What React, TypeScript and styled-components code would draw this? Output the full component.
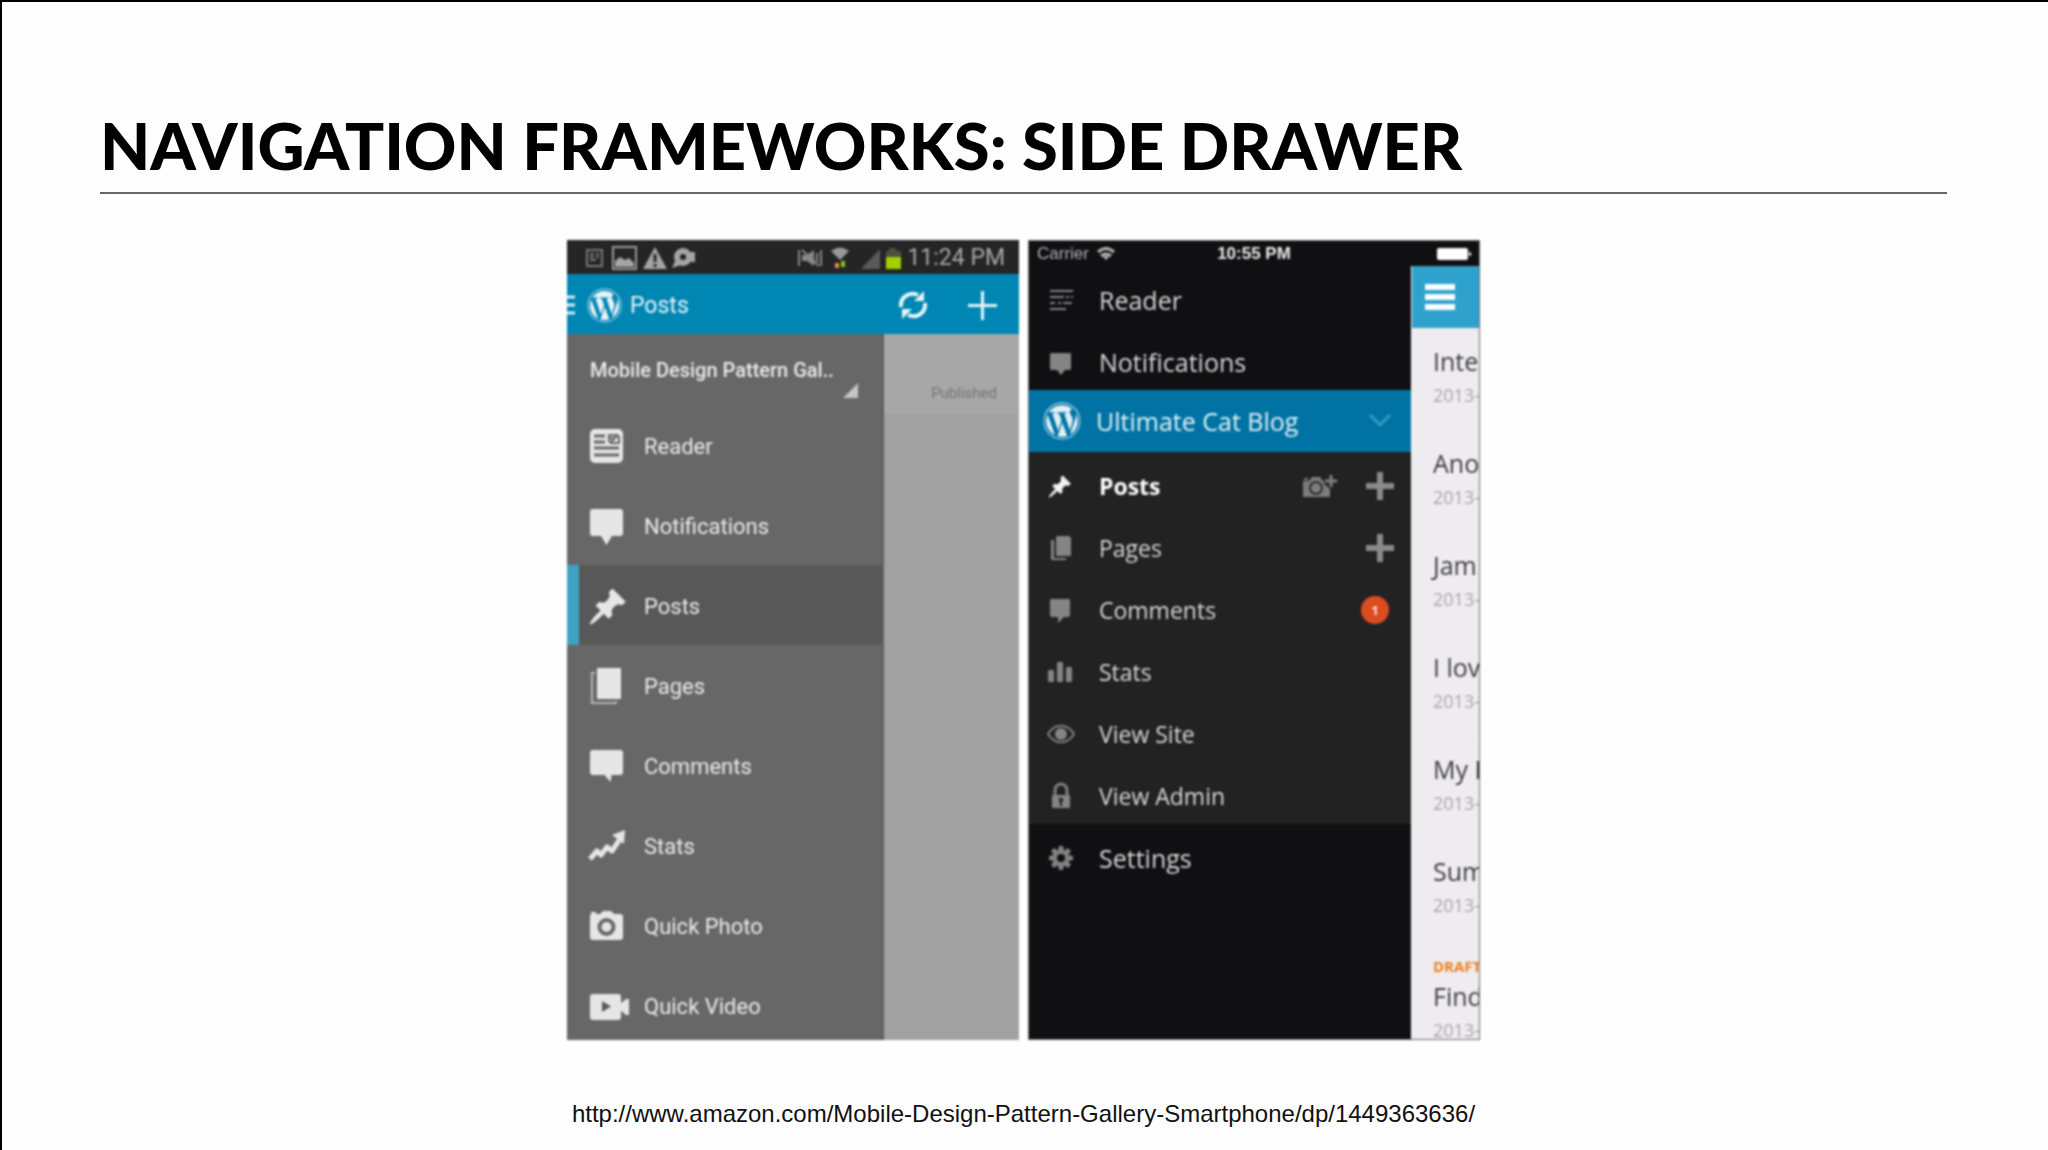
import React from 'react';
import styled, { createGlobalStyle } from 'styled-components';
import { FaWordpress } from 'react-icons/fa';

const GlobalStyle = createGlobalStyle`
  *, *::before, *::after { box-sizing: border-box; }
  body { margin: 0; background: #fefefe; }
  button, select { border: 0; padding: 0; background: none; font: inherit; color: inherit; cursor: pointer; }
  ul { list-style: none; margin: 0; padding: 0; }
`;

const Slide = styled.main`
  min-height: 100vh;
  display: flex;
  flex-direction: column;
  padding: 108px 101px 0 98px;
  border-top: 2px solid #000;
  border-left: 2px solid #000;
  background: #fefefe;
`;

const Title = styled.h1`
  margin: 0;
  padding-bottom: 12px;
  border-bottom: 2px solid #666;
  font: 900 65px/70px Lato, 'Open Sans', sans-serif;
  color: #000;
`;

const Gallery = styled.div`
  display: flex;
  justify-content: center;
  gap: 9px;
  margin-top: 46px;
`;

const Phone = styled.section<{ $font: string }>`
  display: flex;
  flex-direction: column;
  width: 452px;
  height: 800px;
  overflow: hidden;
  font-family: ${(p) => p.$font};
  filter: blur(1px);
`;

const Source = styled.a`
  align-self: center;
  margin-top: 58px;
  font: 24px/32px 'Liberation Sans', Arial, sans-serif;
  color: #111;
  text-decoration: none;
`;

/* Android phone */

const AndroidPhone = styled(Phone)`
  background: #a1a1a1;
`;

const AndroidStatus = styled.div`
  display: flex;
  align-items: center;
  gap: 5px;
  flex: none;
  height: 34px;
  padding: 2px 14px 0 17px;
  background: #252525;
  color: #a8a8a8;
`;

const AndroidClock = styled.time`
  font-size: 23px;
  line-height: 32px;
`;

const Spacer = styled.span`
  flex: 1;
`;

const ActionBar = styled.header`
  display: flex;
  align-items: center;
  flex: none;
  height: 60px;
  padding: 2px 22px 0 0;
  background: #0086b3;
  color: #e8f4f9;
`;

const ActionTitle = styled.h2`
  flex: 1;
  margin: 0 0 0 8px;
  font-size: 23px;
  font-weight: 400;
`;

const IconButton = styled.button<{ $left?: number }>`
  display: flex;
  margin-left: ${(p) => p.$left ?? 0}px;
`;

const AndroidBody = styled.div`
  display: flex;
  flex: 1;
  min-height: 0;
`;

const AndroidDrawer = styled.nav`
  flex: none;
  width: 317px;
  border-right: 2px solid #5f5f5f;
  background: #676767;
  color: #ebebeb;
`;

const Account = styled.label`
  position: relative;
  display: block;
  height: 71px;
  padding: 24px 24px 0 23px;
`;

const AccountSelect = styled.select`
  appearance: none;
  display: block;
  width: 100%;
  height: 24px;
  font-size: 20px;
  font-weight: 500;
  line-height: 24px;
`;

const Corner = styled.svg`
  position: absolute;
  right: 24px;
  bottom: 7px;
  pointer-events: none;
`;

const AndroidItem = styled.button<{ $active?: boolean }>`
  display: flex;
  align-items: center;
  gap: 20px;
  width: 100%;
  height: 80px;
  padding: 2px 0 0 9px;
  border-left: 12px solid ${(p) => (p.$active ? '#3fa2c4' : 'transparent')};
  background: ${(p) => (p.$active ? '#585858' : 'none')};
  font-size: 22px;
  text-align: left;
`;

const AndroidContent = styled.div`
  flex: 1;
`;

const Published = styled.div`
  padding: 49px 22px 11px 0;
  background: #a7a7a7;
  color: #757575;
  font-size: 15px;
  line-height: 20px;
  text-align: right;
`;

/* iPhone */

const ApplePhone = styled(Phone)`
  border: 1px solid #6c6c6e;
  background: #100f11;
`;

const AppleStatus = styled.div`
  display: grid;
  grid-template-columns: 1fr auto 1fr;
  align-items: center;
  flex: none;
  height: 25px;
  padding: 0 8px;
  color: #b4b4b4;
  font: 17px/25px 'Liberation Sans', Arial, sans-serif;
`;

const Carrier = styled.span`
  display: flex;
  align-items: center;
  gap: 8px;
`;

const AppleClock = styled.time`
  color: #eee;
  font-weight: 700;
`;

const Battery = styled.svg`
  justify-self: end;
`;

const AppleBody = styled.div`
  display: flex;
  flex: 1;
  min-height: 0;
`;

const AppleDrawer = styled.nav`
  flex: none;
  width: 382px;
  color: #d8d8d8;
`;

const Group = styled.ul<{ $sub?: boolean }>`
  display: flex;
  flex-direction: column;
  gap: 6px;
  padding-top: 6px;
  background: ${(p) => (p.$sub ? '#222222' : 'none')};
  font-size: ${(p) => (p.$sub ? 23 : 25)}px;
`;

const AppleRow = styled.li`
  display: flex;
  align-items: center;
  height: 56px;
  padding-right: 17px;
`;

const AppleItem = styled.button<{ $bold?: boolean }>`
  display: flex;
  align-items: center;
  gap: 24px;
  flex: 1;
  height: 56px;
  padding-left: 18px;
  color: ${(p) => (p.$bold ? '#fff' : 'inherit')};
  font-weight: ${(p) => (p.$bold ? 700 : 400)};
  text-align: left;
`;

const Blog = styled.button`
  display: flex;
  align-items: center;
  gap: 15px;
  width: 100%;
  height: 62px;
  padding: 0 20px 0 14px;
  background: #0073a4;
  color: #e2f1f7;
  font-size: 25px;
`;

const Badge = styled.span`
  display: flex;
  align-items: center;
  justify-content: center;
  width: 28px;
  height: 28px;
  margin-right: 5px;
  border-radius: 50%;
  background: #dc4c20;
  color: #fbe0d6;
  font-size: 13px;
  font-weight: 700;
`;

const AppleContent = styled.div`
  flex: 1;
  min-width: 0;
  overflow: hidden;
  border-left: 1px solid #fafafa;
  background: #eeecef;
`;

const MenuBar = styled.header`
  display: flex;
  align-items: center;
  height: 62px;
  padding-left: 13px;
  background: #2ea2cc;
`;

const Entry = styled.article`
  height: 102px;
  margin-left: 21px;
  padding-top: 17px;
  border-bottom: 1px solid #e9e7ea;
  white-space: nowrap;
`;

const Draft = styled.p`
  margin: 0 0 5px;
  color: #f07f20;
  font-size: 15px;
  font-weight: 700;
  line-height: 18px;
`;

const EntryTitle = styled.h3`
  margin: 0;
  color: #3c3c3e;
  font-size: 25px;
  font-weight: 400;
  line-height: 32px;
`;

const EntryDate = styled.time`
  display: block;
  margin-top: 7px;
  color: #a6a6a8;
  font-size: 18px;
  line-height: 22px;
`;

/* Drawings */

const PIN =
  'M10.44 3.02l1.82-1.82 6.36 6.35-1.83 1.82c-1.05-.68-2.48-.57-3.41.36l-.75.75c-.92.93-1.04 2.35-.35 3.41l-1.83 1.82-2.41-2.41-2.8 2.79c-.42.42-3.38 2.71-3.8 2.29s1.86-3.39 2.28-3.81l2.79-2.79L4.1 9.36l1.83-1.82c1.05.69 2.48.57 3.4-.36l.75-.75c.93-.92 1.05-2.35.36-3.41z';

const androidIcons: Record<string, React.ReactNode> = {
  reader: (
    <>
      <rect x="2" y="1" width="33" height="34" rx="5" />
      <path d="M6 8h11M6 14h11M6 20h25M6 27h25" stroke="#676767" strokeWidth="3" />
      <path d="M21 7h8l2 2v6h-8l-2-2zM23 14l6-6M22 10h5" fill="none" stroke="#676767" strokeWidth="2" />
    </>
  ),
  notifications: <path d="M5 1h27a3 3 0 0 1 3 3v21a3 3 0 0 1-3 3h-8l-5.500 9-5.500-9H5a3 3 0 0 1-3-3V4a3 3 0 0 1 3-3z" />,
  posts: <path transform="translate(-1 -2) scale(2.080)" d={PIN} />,
  pages: (
    <>
      <rect x="9" y="0" width="24" height="31" rx="1" />
      <path d="M7 5H4v30h24v-2" fill="none" stroke="#b4b4b4" strokeWidth="2" />
    </>
  ),
  comments: <path d="M5 2h27a3 3 0 0 1 3 3v19a3 3 0 0 1-3 3h-8.500l-1 7-6-7H5a3 3 0 0 1-3-3V5a3 3 0 0 1 3-3z" />,
  stats: (
    <>
      <path d="M2 31l7-8 4 4 6-8 5 4 8-12" fill="none" stroke="#e6e6e6" strokeWidth="5" strokeLinejoin="round" />
      <path d="M24 7l13-5-1 14z" />
    </>
  ),
  photo: (
    <>
      <path d="M3 4h5v2h4l3-3h8l3 3h6a3 3 0 0 1 3 3v20a3 3 0 0 1-3 3H5a3 3 0 0 1-3-3V7h1z" />
      <circle cx="18.500" cy="19" r="7" fill="#e6e6e6" stroke="#676767" strokeWidth="4" />
    </>
  ),
  video: (
    <>
      <rect x="2" y="6" width="31" height="26" rx="3" />
      <path d="M31 17l7-6h3v16h-3l-7-6z" />
      <path d="M14 13v11l9-5.500z" fill="#5a5a5a" />
    </>
  ),
};

const AndroidIcon = ({ name }: { name: string }) => (
  <svg width="36" height="36" viewBox="0 0 36 36" fill="#e6e6e6" overflow="visible" aria-hidden="true">
    {androidIcons[name]}
  </svg>
);

const appleIcons: Record<string, React.ReactNode> = {
  reader: (
    <path
      d="M3 5h23M3 11h14M19 11h3M24 11h2M3 17h5M11 17h3M16 17h9M3 23h16"
      fill="none"
      stroke="#848484"
      strokeWidth="2"
    />
  ),
  notifications: <path d="M4 5h19l1 1v15l-1 1h-5l-4 5-4-5H4l-1-1V6z" />,
  posts: <path fill="#f4f4f4" transform="translate(0 2) scale(1.280)" d={PIN} />,
  pages: (
    <>
      <path d="M10 2h12l2 2v18H9V3z" />
      <path d="M4 6h3v18h12v2H4z" />
    </>
  ),
  comments: <path d="M4 3h18l1 1v15l-1 2h-5l-6 6v-6H4l-1-2V4z" />,
  stats: (
    <>
      <rect x="1" y="12" width="6" height="12" rx="1" />
      <rect x="10" y="4" width="6" height="20" rx="1" />
      <rect x="19" y="9" width="6" height="15" rx="1" />
    </>
  ),
  site: (
    <>
      <path d="M1 14c7-11 19-11 26 0-7 11-19 11-26 0z" fill="none" stroke="#808080" strokeWidth="2" />
      <circle cx="14" cy="14" r="6" />
    </>
  ),
  admin: (
    <>
      <path d="M8 14V8a6 6 0 0 1 12 0v6" fill="none" stroke="#808080" strokeWidth="3" />
      <rect x="5" y="13" width="18" height="13" rx="1" />
      <path d="M12 16h4v3l-1 1v4h-2v-4l-1-1z" fill="#222" />
    </>
  ),
  settings: (
    <>
      <circle cx="14" cy="14" r="6" fill="none" stroke="#808080" strokeWidth="4" />
      {[0, 45, 90, 135, 180, 225, 270, 315].map((a) => (
        <path key={a} d="M12 2h4l1 5h-6z" transform={`rotate(${a} 14 14)`} />
      ))}
    </>
  ),
};

const AppleIcon = ({ name }: { name: string }) => (
  <svg width="28" height="28" viewBox="0 0 28 28" fill="#848484" aria-hidden="true">
    {appleIcons[name]}
  </svg>
);

const Plus = ({ size, weight, color }: { size: number; weight: number; color: string }) => (
  <svg width={size} height={size} viewBox="0 0 28 28" aria-hidden="true">
    <path d="M14 0v28M0 14h28" stroke={color} strokeWidth={weight} />
  </svg>
);

const NoticeIcons = () => (
  <svg width="114" height="26" viewBox="0 0 114 26" fill="#a4a4a4" aria-hidden="true">
    <path d="M3 5h15v16H3z" fill="none" stroke="#777" strokeWidth="2" />
    <path d="M6 9h4M12 9h3M6 12h4M12 12h3M6 15h6" stroke="#777" strokeWidth="2" />
    <path d="M29 2h23v22H29z" fill="none" stroke="#999" strokeWidth="2" />
    <path d="M31 22v-6l5-4 5 3 4-2 5 5v4z" />
    <path d="M71 2l12 22H59z" />
    <path d="M71 9v8M71 19v3" stroke="#252525" strokeWidth="3" />
    <circle cx="99" cy="12" r="9" />
    <path d="M91 16l-3 7 9-3zM105 7h6v10h-6z" />
    <circle cx="99" cy="12" r="3" fill="#222" />
  </svg>
);

const SignalIcons = () => (
  <svg width="104" height="26" viewBox="0 0 104 26" aria-hidden="true">
    <path d="M1 5v16M23 5v16" stroke="#888" strokeWidth="2" />
    <path d="M4 10h5l7-5v16l-7-5H4z" fill="#888" />
    <path d="M4 5l17 16M19 8v9" stroke="#888" strokeWidth="2" />
    <path d="M33 6q9-7 18 0l-9 9z" fill="#999" />
    <path d="M37 18h4v5h-4z" fill="#e89042" />
    <path d="M43 16h4v6h-4z" fill="#8dbd21" />
    <path d="M63 24L82 4v20z" fill="#595959" />
    <path d="M91 3h7v3h5v8H88V6h3z" fill="#4b5140" />
    <path d="M88 12h15v12H88z" fill="#a4d000" />
  </svg>
);

const androidNav = [
  ['reader', 'Reader'],
  ['notifications', 'Notifications'],
  ['posts', 'Posts'],
  ['pages', 'Pages'],
  ['comments', 'Comments'],
  ['stats', 'Stats'],
  ['photo', 'Quick Photo'],
  ['video', 'Quick Video'],
];

const entries = ['Inte', 'Ano', 'Jam', 'I lov', 'My F', 'Sum', 'Find'];

const AppleNavRow = ({ icon, label, bold, children }: {
  icon: string;
  label: string;
  bold?: boolean;
  children?: React.ReactNode;
}) => (
  <AppleRow>
    <AppleItem $bold={bold}>
      <AppleIcon name={icon} />
      {label}
    </AppleItem>
    {children}
  </AppleRow>
);

const Android = () => (
  <AndroidPhone $font="Roboto, sans-serif">
    <AndroidStatus>
      <NoticeIcons />
      <Spacer />
      <SignalIcons />
      <AndroidClock>11:24 PM</AndroidClock>
    </AndroidStatus>
    <ActionBar>
      <IconButton aria-label="Close drawer">
        <svg width="20" height="24" viewBox="0 0 20 24" aria-hidden="true">
          <path d="M0 4h8M0 12h8M0 20h8" stroke="#d9edf5" strokeWidth="3" />
        </svg>
      </IconButton>
      <FaWordpress size={35} />
      <ActionTitle>Posts</ActionTitle>
      <IconButton aria-label="Refresh">
        <svg width="30" height="30" viewBox="0 0 30 30" fill="none" stroke="#e8f4f9" strokeWidth="4" aria-hidden="true">
          <path d="M3 17C2 8 10 1 20 5M27 13c1 9-7 16-17 12" />
          <path d="M26 1v10H16zM4 29V19h10z" fill="#e8f4f9" stroke="none" />
        </svg>
      </IconButton>
      <IconButton aria-label="New post" $left={40}>
        <Plus size={29} weight={3} color="#e8f4f9" />
      </IconButton>
    </ActionBar>
    <AndroidBody>
      <AndroidDrawer aria-label="Android drawer">
        <Account>
          <AccountSelect aria-label="Blog">
            <option>Mobile Design Pattern Gal..</option>
          </AccountSelect>
          <Corner width="15" height="15" viewBox="0 0 15 15" aria-hidden="true">
            <path d="M15 0v15H0z" fill="#c4c4c4" />
          </Corner>
        </Account>
        <ul>
          {androidNav.map(([icon, label]) => (
            <li key={icon}>
              <AndroidItem $active={icon === 'posts'}>
                <AndroidIcon name={icon} />
                {label}
              </AndroidItem>
            </li>
          ))}
        </ul>
      </AndroidDrawer>
      <AndroidContent>
        <Published>Published</Published>
      </AndroidContent>
    </AndroidBody>
  </AndroidPhone>
);

const Apple = () => (
  <ApplePhone $font="'Open Sans', sans-serif">
    <AppleStatus>
      <Carrier>
        Carrier
        <svg width="18" height="14" viewBox="0 0 18 14" fill="none" stroke="#b4b4b4" strokeWidth="3" aria-hidden="true">
          <path d="M1 5q8-7 16 0M4 9q5-4 10 0" />
          <path d="M6 10q3-2 6 0l-3 3z" fill="#b4b4b4" stroke="none" />
        </svg>
      </Carrier>
      <AppleClock>10:55 PM</AppleClock>
      <Battery width="34" height="12" viewBox="0 0 34 12" fill="#fff" aria-hidden="true">
        <rect width="31" height="12" rx="2" />
        <rect x="32" y="4" width="2" height="4" rx="1" />
      </Battery>
    </AppleStatus>
    <AppleBody>
      <AppleDrawer aria-label="iPhone drawer">
        <Group>
          <AppleNavRow icon="reader" label="Reader" />
          <AppleNavRow icon="notifications" label="Notifications" />
        </Group>
        <Blog aria-expanded="true">
          <FaWordpress size={38} />
          Ultimate Cat Blog
          <Spacer />
          <svg width="22" height="14" viewBox="0 0 22 14" aria-hidden="true">
            <path d="M1 1l10 10L21 1" fill="none" stroke="#3499c2" strokeWidth="3" />
          </svg>
        </Blog>
        <Group $sub>
          <AppleNavRow icon="posts" label="Posts" bold>
            <IconButton aria-label="Quick photo post">
              <svg width="34" height="22" viewBox="0 0 34 22" fill="#7c7c7c" aria-hidden="true">
                <path d="M0 6h6l3-4h8l3 4h3v5h4v11H0zM1 3h4v2H1z" />
                <circle cx="13" cy="13" r="6" fill="#7c7c7c" stroke="#2a2a2a" strokeWidth="2" />
                <path d="M27 1v12M21 7h12" stroke="#222" strokeWidth="5" />
                <path d="M28 0v12M22 6h12" stroke="#808080" strokeWidth="3" />
              </svg>
            </IconButton>
            <IconButton aria-label="New post" $left={29}>
              <Plus size={28} weight={6} color="#8a8a8a" />
            </IconButton>
          </AppleNavRow>
          <AppleNavRow icon="pages" label="Pages">
            <IconButton aria-label="New page">
              <Plus size={28} weight={6} color="#8a8a8a" />
            </IconButton>
          </AppleNavRow>
          <AppleNavRow icon="comments" label="Comments">
            <Badge>1</Badge>
          </AppleNavRow>
          <AppleNavRow icon="stats" label="Stats" />
          <AppleNavRow icon="site" label="View Site" />
          <AppleNavRow icon="admin" label="View Admin" />
        </Group>
        <Group>
          <AppleNavRow icon="settings" label="Settings" />
        </Group>
      </AppleDrawer>
      <AppleContent>
        <MenuBar>
          <IconButton aria-label="Menu">
            <svg width="30" height="28" viewBox="0 0 30 28" aria-hidden="true">
              <path d="M0 4h30M0 14h30M0 24h30" stroke="#f8fdff" strokeWidth="6" />
            </svg>
          </IconButton>
        </MenuBar>
        {entries.map((title) => (
          <Entry key={title}>
            {title === 'Find' && <Draft>DRAFT</Draft>}
            <EntryTitle>{title}</EntryTitle>
            <EntryDate>2013-</EntryDate>
          </Entry>
        ))}
      </AppleContent>
    </AppleBody>
  </ApplePhone>
);

export default function App() {
  return (
    <>
      <GlobalStyle />
      <Slide>
        <Title>NAVIGATION FRAMEWORKS: SIDE DRAWER</Title>
        <Gallery>
          <Android />
          <Apple />
        </Gallery>
        <Source href="http://www.amazon.com/Mobile-Design-Pattern-Gallery-Smartphone/dp/1449363636/">
          http://www.amazon.com/Mobile-Design-Pattern-Gallery-Smartphone/dp/1449363636/
        </Source>
      </Slide>
    </>
  );
}
